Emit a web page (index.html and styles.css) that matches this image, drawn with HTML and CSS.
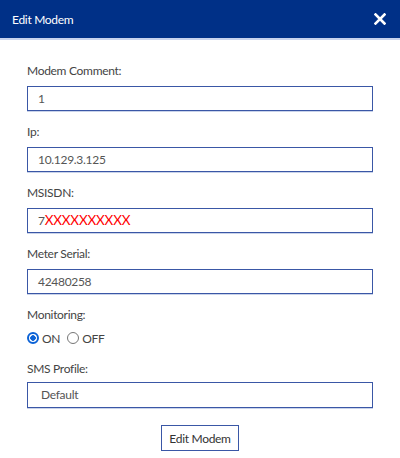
FILE: index.html
```html
<!DOCTYPE html>
<html>
<head>
<meta charset="utf-8">
<link rel="stylesheet" href="styles.css">
</head>
<body>
<div class="modal">
  <div class="modal-header">
    <span class="modal-title">Edit Modem</span>
    <svg class="close" width="12" height="12" viewBox="0 0 12 12"><path d="M1.5 1.5 L10.5 10.5 M10.5 1.5 L1.5 10.5" stroke="#fff" stroke-width="2.6" stroke-linecap="square"/></svg>
  </div>
  <div class="modal-body">
    <div class="field">
      <label class="label">Modem Comment:</label>
      <div class="input">1</div>
    </div>
    <div class="field">
      <label class="label">Ip:</label>
      <div class="input">10.129.3.125</div>
    </div>
    <div class="field">
      <label class="label">MSISDN:</label>
      <div class="input">7<span class="masked">XXXXXXXXXX</span></div>
    </div>
    <div class="field">
      <label class="label">Meter Serial:</label>
      <div class="input">42480258</div>
    </div>
    <div class="field field-radio">
      <label class="label">Monitoring:</label>
      <div class="radios">
        <span class="radio"><span class="dot checked"></span>ON</span>
        <span class="radio"><span class="dot"></span>OFF</span>
      </div>
    </div>
    <div class="field field-sms">
      <label class="label">SMS Profile:</label>
      <div class="input select">Default</div>
    </div>
    <div class="actions">
      <button class="btn">Edit Modem</button>
    </div>
  </div>
</div>
</body>
</html>
```
FILE: styles.css
```css
* { box-sizing: border-box; }
body {
  margin: 0;
  background: #fff;
  font-family: Lato, "Noto Sans", sans-serif;
  letter-spacing: -0.3px;
}
.modal { width: 400px; }
.modal-header {
  height: 40px;
  background: #003087;
  border-bottom: 2px solid #c7d3ee;
  display: flex;
  align-items: center;
  justify-content: space-between;
  padding: 0 14px 0 12px;
}
.modal-title {
  color: #fff;
  font-size: 12px;
}
.close { display: block; }
.modal-body {
  padding: 22px 27px 0 27px;
}
.field { margin-bottom: 12px; }
.label {
  display: block;
  font-size: 12px;
  line-height: 18px;
  color: #444;
  margin-bottom: 6px;
}
.input {
  height: 25px;
  border: 1px solid #3a57a6;
  box-shadow: 0 1px 0 #c9d3ea;
  padding: 0 10px;
  font-size: 12px;
  line-height: 23px;
  color: #555;
}
.select { padding-left: 13px; height: 26px; line-height: 24px; }
.masked { color: #ff0000; font-size: 13.5px; letter-spacing: -0.2px; }
.field-radio { margin-bottom: 13px; }
.field-radio .label { margin-bottom: 5px; }
.field-sms .label { margin-bottom: 4px; }
.radios {
  display: flex;
  align-items: center;
  gap: 7px;
  height: 18px;
  font-size: 12px;
  color: #444;
}
.radio { display: flex; align-items: center; gap: 3px; }
.dot {
  width: 12px;
  height: 12px;
  border-radius: 50%;
  border: 1.5px solid #767676;
  background: #fff;
}
.dot.checked {
  border: 2px solid #0b62d6;
  background: radial-gradient(circle, #0b62d6 0 2.5px, #fff 3px);
}
.actions {
  display: flex;
  justify-content: center;
  padding-top: 5px;
}
.btn {
  width: 78px;
  height: 26px;
  background: #fff;
  border: 1px solid #3a57a6;
  font-family: inherit;
  letter-spacing: -0.3px;
  font-size: 12px;
  color: #333;
  padding: 0;
}
```
